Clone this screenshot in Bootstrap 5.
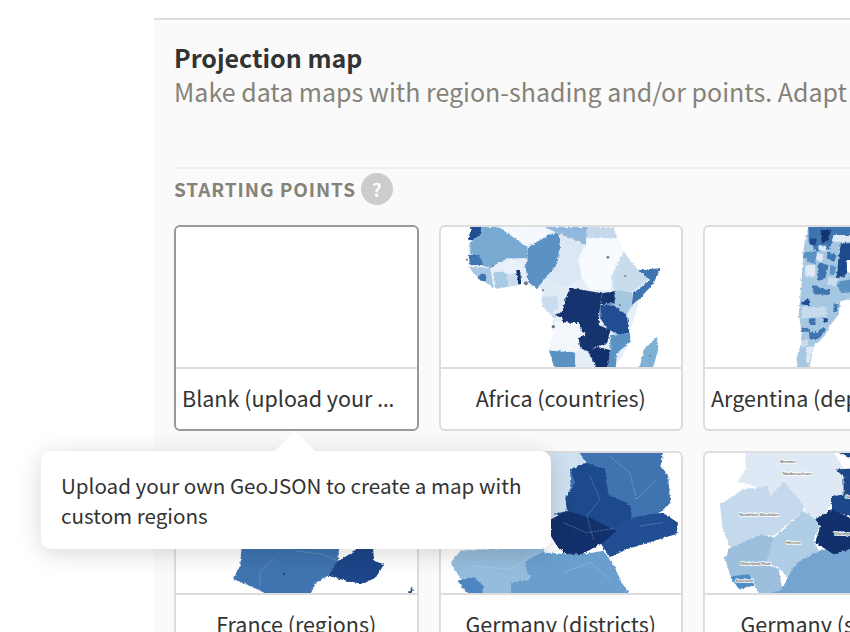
<!DOCTYPE html>
<html lang="en">
<head>
<meta charset="utf-8">
<title>Projection map</title>
<link href="https://cdn.jsdelivr.net/npm/bootstrap@5.3.0/dist/css/bootstrap.min.css" rel="stylesheet">
<style>
html, body { height: 632px; overflow: hidden; background: #fff; }
body { font-family: "Noto Sans CJK SC", "Noto Sans", sans-serif; color: #333; }
.page-wrap { padding: 18px 0 0 154px; position: relative; height: 632px; overflow: hidden; }
.panel-main { background: #fafafa; border-top: 2px solid #ddd; padding: 22px 0 0 20px; width: 696px; height: 614px; overflow: hidden; }
.title-main { font-size: 25px; line-height: 31px; font-weight: 700; margin: 0; color: #333; }
.desc-main { font-size: 25px; line-height: 36px; color: #858279; margin: 0; white-space: nowrap; height: 94px; }
.divider-main { height: 2px; background: #eee; }
.start-row { height: 40px; margin-bottom: 16px; }
.start-label { font-size: 19px; font-weight: 700; letter-spacing: .9px; color: #858279; line-height: 32px; text-transform: uppercase; }
.help-dot { width: 32px; height: 32px; border-radius: 50%; background: #ccc; color: #fff; font-weight: 700; font-size: 18px; line-height: 32px; text-align: center; margin-left: 5px; }
.map-grid { display: grid; grid-template-columns: repeat(3, 244.5px); gap: 20px; }
.map-card { height: 206px; border: 2px solid #ddd; border-radius: 6px; background: #fff; overflow: hidden; }
.map-card.is-picked { border-color: #999; }
.map-pic { display: block; width: 100%; height: 140px; flex: none; }
.map-name { border-top: 2px solid #ddd; font-size: 21.5px; line-height: 58px; padding: 0 6px; text-align: center; color: #333; }
.dots-end { font-family: "Noto Sans", sans-serif; }
.pop-tip { position: absolute; left: 41px; top: 451px; width: 510px; height: 98px; background: #fff; border-radius: 10px; box-shadow: 0 4px 24px rgba(0,0,0,.16); padding: 19px 20px; font-size: 20.6px; line-height: 30px; color: #333; }
.pop-arrow { position: absolute; left: 234px; top: -20px; width: 40px; height: 20px; display: block; }
.map-lbl { font-size: 13px; font-family: "Liberation Sans", sans-serif; paint-order: stroke; stroke: #fff; stroke-width: 4px; fill: #333; text-anchor: middle; }
.seams { fill: none; stroke: #fff; stroke-opacity: .4; stroke-width: 2; stroke-dasharray: 6 3; }
.rough { filter: url(#edge-rough); }
.filter-defs { position: absolute; width: 0; height: 0; }
</style>
</head>
<body>
<svg class="filter-defs" aria-hidden="true"><defs>
  <filter id="edge-rough" x="-5%" y="-5%" width="110%" height="110%" color-interpolation-filters="sRGB">
    <feTurbulence type="fractalNoise" baseFrequency="0.12" numOctaves="3" seed="4"/>
    <feDisplacementMap in="SourceGraphic" scale="10" xChannelSelector="R" yChannelSelector="G"/>
  </filter>
</defs></svg>
<div class="page-wrap">
  <div class="panel-main">
    <h1 class="title-main">Projection map</h1>
    <p class="desc-main">Make data maps with region-shading and/or points. Adapt it to your own data.</p>
    <div class="divider-main"></div>
    <div class="start-row d-flex align-items-center">
      <span class="start-label">Starting points</span>
      <span class="help-dot">?</span>
    </div>
    <div class="map-grid">
      <div class="map-card is-picked d-flex flex-column">
        <svg class="map-pic" viewBox="0 0 241 140"></svg>
        <div class="map-name text-start text-nowrap">Blank (upload your <span class="dots-end">…</span></div>
      </div>

      <div class="map-card d-flex flex-column">
        <svg class="map-pic" viewBox="33 36 720 420"><g class="rough">
          <polygon fill="#e6eff8" points="120,36 550,36 585,130 625,165 690,160 630,250 597,355 600,380 555,456 375,456 357,407 370,355 365,303 335,270 335,225 285,205 195,222 115,155 114,76"/>
          <polygon fill="#f5f9fe" points="205,36 340,36 360,55 290,95"/>
          <polygon fill="#78aad2" points="128,76 150,60 155,36 205,36 290,95 292,130 235,130 210,140 180,160 155,150 120,115 120,80"/>
          <polygon fill="#8fb8dc" points="340,36 470,36 468,90 385,55"/>
          <polygon fill="#c5d9ec" points="470,36 550,36 558,70 470,70"/>
          <polygon fill="#5a92c4" points="292,130 292,98 360,58 385,55 390,100 380,150 345,190 320,222 295,200 285,155"/>
          <polygon fill="#dbe7f4" points="385,58 460,90 445,130 460,190 400,215 345,190 380,150 390,100"/>
          <polygon fill="#f7fafe" points="468,70 560,70 585,130 545,180 540,225 480,225 455,190 445,130 468,90"/>
          <polygon fill="#c9dcee" points="580,110 625,165 660,190 605,230 550,225 545,180"/>
          <polygon fill="#3e74b0" points="625,165 690,160 670,205 630,250 605,270 608,235 660,195"/>
          <polygon fill="#a5c7e2" points="555,225 605,232 605,270 590,300 545,270"/>
          <polygon fill="#e0ebf6" points="345,190 400,215 415,225 400,290 365,303 335,270 335,225"/>
          <polygon fill="#c9dcee" points="335,245 380,245 385,275 360,300 335,270"/>
          <polygon fill="#14336f" points="420,218 515,235 510,270 505,330 540,345 530,385 500,375 455,350 445,325 400,325 395,305 365,303 395,290 410,240"/>
          <polygon fill="#14336f" points="515,235 553,228 553,265 510,268"/>
          <polygon fill="#fff" points="510,280 520,275 516,298 508,296"/>
          <polygon fill="#214e93" points="510,270 545,268 590,300 597,355 560,358 530,340 510,310"/>
          <polygon fill="#f3f7fc" points="375,320 445,325 455,350 445,410 360,405 370,355"/>
          <polygon fill="#14336f" points="445,370 500,335 540,345 530,385 495,395 480,412 450,400"/>
          <polygon fill="#5a92c4" points="540,360 600,355 600,380 560,415 555,470 520,470 535,440 540,405"/>
          <polygon fill="#12306b" points="475,412 500,395 540,405 535,440 525,470 500,460"/>
          <polygon fill="#5a92c4" points="357,407 435,412 435,470 375,470"/>
          <polygon fill="#e6eff8" points="435,415 475,422 505,470 435,470"/>
          <polygon fill="#7fb0d5" points="680,365 685,400 665,470 625,470 640,405"/>
          <polygon fill="#a5c7e2" points="115,155 180,160 190,220 155,195 130,175"/>
          <polygon fill="#3e74b0" points="115,120 145,120 160,150 120,150"/>
          <polygon fill="#214e93" points="125,30 155,30 150,60 128,75 114,76"/>
          <circle fill="#3e74b0" cx="157" cy="187" r="11"/>
          <polygon fill="#a8cae4" points="190,170 230,170 235,215 195,222"/>
          <polygon fill="#c9dcee" points="232,175 260,165 270,210 235,215"/>
          <polygon fill="#e9f1f9" points="212,155 240,135 275,150 280,165 245,178 225,175"/>
          <polygon fill="#14336f" points="258,165 270,165 272,208 264,208"/>
        </g>
          <g fill="#777"><circle cx="533" cy="127" r="4"/><circle cx="585" cy="183" r="3"/><circle cx="569" cy="270" r="3"/><circle cx="369" cy="335" r="5"/><circle cx="660" cy="422" r="3"/><circle cx="287" cy="205" r="6"/><circle cx="188" cy="153" r="3"/><circle cx="338" cy="225" r="3"/><circle cx="110" cy="134" r="3"/></g>
        </svg>
        <div class="map-name text-truncate">Africa (countries)</div>
      </div>

      <div class="map-card d-flex flex-column">
        <svg class="map-pic" viewBox="825 36 720 420"><g class="rough">
          <polygon fill="#a5c7e2" points="1135,30 1290,30 1290,240 1230,260 1225,300 1200,330 1185,360 1150,395 1135,470 1105,470 1098,430 1110,395 1115,350 1105,300 1110,250 1115,180 1120,100"/>
          <polygon fill="#3e74b0" points="1135,30 1290,30 1290,60 1210,60 1200,100 1160,110 1135,80"/>
          <polygon fill="#14336f" points="1170,45 1200,45 1195,75 1175,85"/>
          <polygon fill="#1d4a8c" points="1232,85 1285,85 1285,135 1240,185 1218,190 1225,130"/>
          <polygon fill="#fff" points="1250,135 1285,135 1285,175 1250,170"/>
          <polygon fill="#dfe9f5" points="1210,60 1285,60 1285,80 1205,80"/>
          <polygon fill="#5a92c4" points="1130,110 1160,110 1155,145 1130,140"/>
          <polygon fill="#3e74b0" points="1165,145 1195,150 1185,190 1160,195"/>
          <polygon fill="#3e74b0" points="1190,110 1220,120 1210,140 1190,130"/>
          <polygon fill="#dfe9f5" points="1125,150 1155,150 1155,185 1125,185"/>
          <polygon fill="#1d4a8c" points="1140,70 1160,72 1155,90 1138,88"/>
          <polygon fill="#dfe9f5" points="1165,90 1190,92 1185,108 1165,106"/>
          <polygon fill="#5a92c4" points="1120,110 1135,112 1130,130 1120,128"/>
          <polygon fill="#dfe9f5" points="1160,115 1180,118 1175,140 1160,136"/>
          <polygon fill="#5a92c4" points="1200,150 1218,155 1212,180 1198,176"/>
          <polygon fill="#c9dcee" points="1195,185 1225,190 1220,215 1190,210"/>
          <polygon fill="#5a92c4" points="1220,200 1285,190 1285,230 1230,235"/>
          <polygon fill="#3e74b0" points="1148,212 1200,225 1195,240 1150,238"/>
          <polygon fill="#214e93" points="1120,255 1138,252 1140,272 1112,268"/>
          <polygon fill="#c9dcee" points="1115,275 1190,275 1188,305 1115,310"/>
          <polygon fill="#3e74b0" points="1210,268 1225,268 1222,290 1210,290"/>
          <polygon fill="#3e74b0" points="1136,310 1156,310 1156,330 1136,330"/>
          <polygon fill="#214e93" points="1178,308 1195,310 1190,322 1178,320"/>
          <polygon fill="#3e74b0" points="1136,352 1165,350 1180,336 1188,345 1165,372 1138,372"/>
          <polygon fill="#3e74b0" points="1112,340 1136,338 1136,350 1112,350"/>
          <polygon fill="#dfe9f5" points="1130,395 1150,395 1135,450 1128,445"/>
          <polygon fill="#c9dcee" points="1115,375 1135,375 1130,395 1112,395"/>
        </g></svg>
        <div class="map-name text-truncate">Argentina (departments)</div>
      </div>

      <div class="map-card d-flex flex-column">
        <svg class="map-pic" viewBox="438 99 723 423"><g class="rough">
          <polygon fill="#5a92c4" points="438,99 1160,99 1160,380 438,380"/>
          <polygon fill="#3f74b1" points="635,370 930,370 925,430 895,470 860,490 840,530 720,530 680,510 610,480 630,440"/>
          <polygon fill="#1d4589" points="925,425 970,400 1000,370 1030,370 1035,425 1065,435 1040,475 1000,495 950,485 895,470"/>
          <polygon fill="#1d4589" points="1135,530 1150,500 1152,530"/>
        </g>
          <polyline class="seams" points="730,420 690,460 690,500"/>
          <polyline class="seams" points="800,395 880,405 925,425"/>
          <circle fill="#14336f" cx="763" cy="464" r="3"/>
        </svg>
        <div class="map-name text-truncate">France (regions)</div>
      </div>

      <div class="map-card d-flex flex-column">
        <svg class="map-pic" viewBox="33 40 720 422"><g class="rough">
          <polygon fill="#cfe0f0" points="100,30 440,30 470,70 420,90 435,130 405,175 410,215 362,240 340,330 100,330"/>
          <polygon fill="#3f74b1" points="440,30 700,30 695,80 715,110 722,190 690,220 640,238 600,235 520,300 420,250 420,90 470,68"/>
          <polygon fill="#1d4a8c" points="420,90 470,70 525,90 535,165 600,195 605,235 565,270 370,225 410,215 405,175 435,130"/>
          <polygon fill="#214e93" points="590,240 660,225 700,220 745,250 740,285 720,290 640,315 590,330 540,355 510,310 560,260"/>
          <polygon fill="#12306b" points="362,240 410,215 480,235 560,275 520,310 455,345 415,350 380,320 362,290"/>
          <polygon fill="#94bcdc" points="90,335 335,320 345,340 285,365 300,420 240,430 240,475 150,475 90,420 60,370"/>
          <polygon fill="#6a9fcd" points="335,340 410,345 455,345 520,335 555,385 575,430 605,475 370,475 290,400 285,365"/>
          <polygon fill="#6a9fcd" points="285,365 340,350 370,475 240,475 240,430 300,420"/>
          <polygon fill="#4c85bf" points="80,425 130,415 158,440 155,475 120,475"/>
        </g>
          <polyline class="seams" points="480,110 510,180 470,230 490,300"/>
          <polyline class="seams" points="540,50 600,100 620,180 680,120"/>
          <polyline class="seams" points="400,250 470,280 540,270"/>
          <polyline class="seams" points="630,260 700,250"/>
          <polyline class="seams" points="120,380 240,390 320,340"/>
          <polyline class="seams" points="400,400 480,370 540,420"/>
        </svg>
        <div class="map-name text-truncate">Germany (districts)</div>
      </div>

      <div class="map-card d-flex flex-column">
        <svg class="map-pic" viewBox="825 40 720 422"><g class="rough">
          <polygon fill="#dfe9f5" points="945,30 1205,30 1240,85 1240,170 1205,190 1180,230 1140,240 1115,200 1090,160 1060,125 1020,170 1005,150 920,125 945,90"/>
          <polygon fill="#c5d9ec" points="868,195 935,150 1010,140 1020,170 1060,125 1090,160 1118,195 1118,215 1030,290 990,285 900,325 875,265"/>
          <polygon fill="#73a5d0" points="1090,375 1165,335 1290,310 1290,475 990,475 1060,440"/>
          <polygon fill="#b0cde6" points="1120,215 1170,250 1150,300 1165,335 1100,370 1070,415 1045,385 1005,370 1025,300"/>
          <polygon fill="#9cbfdd" points="880,355 900,325 990,285 1030,295 1005,375 1045,390 1055,450 990,475 965,420 900,410"/>
          <polygon fill="#4f8cc6" points="898,412 955,405 972,440 925,450"/>
          <polygon fill="#1c4789" points="1215,90 1290,85 1290,240 1205,215 1205,170 1240,165 1240,110"/>
          <polygon fill="#1c4789" points="1205,30 1290,30 1290,70"/>
          <polygon fill="#12306b" points="1155,240 1205,210 1290,250 1290,320 1210,345 1155,310 1170,260"/>
        </g>
          <text class="map-lbl" x="1072" y="70">Bremen</text>
          <text class="map-lbl" x="1100" y="105">Niedersachsen</text>
          <text class="map-lbl" x="985" y="229">Nordrhein-Westfalen</text>
          <text class="map-lbl" x="1090" y="313">Hessen</text>
          <text class="map-lbl" x="975" y="378">Rheinland-Pfalz</text>
          <text class="map-lbl" x="940" y="430">Saarland</text>
          <text class="map-lbl" x="1240" y="287">Thüringen</text>
          <text class="map-lbl" x="1290" y="177">Sachsen-Anhalt</text>
        </svg>
        <div class="map-name text-truncate">Germany (states)</div>
      </div>
    </div>
  </div>

  <div class="pop-tip">
    <svg class="pop-arrow" viewBox="0 0 40 20"><polygon fill="#fff" points="0,20 20,0 40,20"/></svg>
    Upload your own GeoJSON to create a map with custom regions
  </div>
</div>
<script src="https://cdn.jsdelivr.net/npm/bootstrap@5.3.0/dist/js/bootstrap.bundle.min.js"></script>
</body>
</html>
